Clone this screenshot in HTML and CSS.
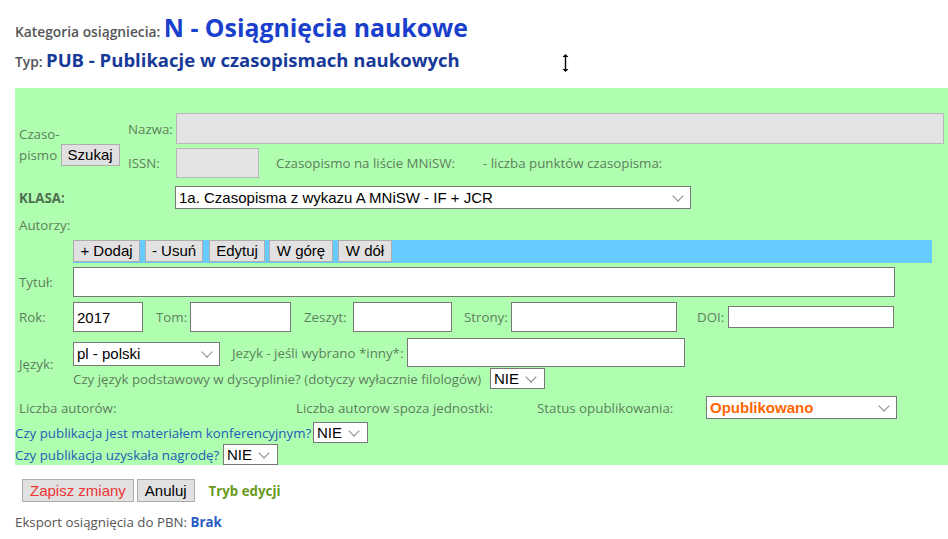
FILE: index.html
```html
<!DOCTYPE html>
<html lang="pl">
<head>
  <meta charset="UTF-8">
  <title>Osiągnięcie - edycja</title>
  <link rel="stylesheet" href="styles.css">
</head>
<body>

  <div class="head">
    <div class="head-line"><span class="head-label">Kategoria osiągniecia:</span> <span class="kat">N - Osiągnięcia naukowe</span></div>
    <div class="head-line line-typ"><span class="head-label">Typ:</span> <span class="typ">PUB - Publikacje w czasopismach naukowych</span></div>
    <svg class="cursor" width="11" height="22" viewBox="0 0 11 22">
      <path d="M5.5 0.5 L10 5.5 L7 5.5 L7 16.5 L10 16.5 L5.5 21.5 L1 16.5 L4 16.5 L4 5.5 L1 5.5 Z" fill="#fff"/>
      <path d="M5.5 2 L8.5 5 L6.2 5 L6.2 17 L8.5 17 L5.5 20 L2.5 17 L4.8 17 L4.8 5 L2.5 5 Z" fill="#000"/>
    </svg>
  </div>

  <div class="panel">

    <div class="row journal">
      <div class="journal-cell">
        <div>Czaso-</div>
        <div>pismo <button class="btn">Szukaj</button></div>
      </div>
      <div class="journal-fields">
        <div class="line">
          <span class="lbl-short">Nazwa:</span>
          <input type="text" class="in-nazwa" disabled>
        </div>
        <div class="line">
          <span class="lbl-short">ISSN:</span>
          <input type="text" class="in-issn" disabled>
          <span class="txt-mnisw">Czasopismo na liście MNiSW:</span>
          <span>- liczba punktów czasopisma:</span>
        </div>
      </div>
    </div>

    <div class="row klasa">
      <span class="lbl-wide"><b>KLASA:</b></span>
      <span class="sel sel-klasa">
        <select><option>1a. Czasopisma z wykazu A MNiSW - IF + JCR</option></select>
      </span>
    </div>

    <div class="row autorzy">
      <span>Autorzy:</span>
    </div>

    <div class="toolbar">
      <button class="btn tb-dodaj">+ Dodaj</button>
      <button class="btn tb-usun">- Usuń</button>
      <button class="btn tb-edytuj">Edytuj</button>
      <button class="btn tb-gora">W górę</button>
      <button class="btn tb-dol">W dół</button>
    </div>

    <div class="row tytul">
      <span class="lbl">Tytuł:</span>
      <input type="text" class="in-tytul">
    </div>

    <div class="row rok">
      <span class="lbl">Rok:</span>
      <input type="text" class="in-rok" value="2017">
      <span class="lbl-tom">Tom:</span>
      <input type="text" class="in-tom">
      <span class="lbl-zeszyt">Zeszyt:</span>
      <input type="text" class="in-zeszyt">
      <span class="lbl-strony">Strony:</span>
      <input type="text" class="in-strony">
      <span class="lbl-doi">DOI:</span>
      <input type="text" class="in-doi">
    </div>

    <div class="row jezyk">
      <span class="lbl">Język:</span>
      <div class="jezyk-fields">
        <div class="line">
          <span class="sel sel-jezyk">
            <select><option>pl - polski</option></select>
          </span>
          <span class="lbl-inny">Jezyk - jeśli wybrano *inny*:</span>
          <input type="text" class="in-inny">
        </div>
        <div class="line line-filo">
          <span class="txt-filo">Czy język podstawowy w dyscyplinie? (dotyczy wyłacznie filologów)</span>
          <span class="sel sel-nie">
            <select><option>NIE</option></select>
          </span>
        </div>
      </div>
    </div>

    <div class="row liczba">
      <span class="lbl-autorow">Liczba autorów:</span>
      <span class="lbl-spoza">Liczba autorow spoza jednostki:</span>
      <span class="lbl-status">Status opublikowania:</span>
      <span class="sel sel-status">
        <select><option>Opublikowano</option></select>
      </span>
    </div>

    <div class="question q-konf">
      <span class="txt-konf">Czy publikacja jest materiałem konferencyjnym?</span>
      <span class="sel sel-nie">
        <select><option>NIE</option></select>
      </span>
    </div>

    <div class="question q-nagroda">
      <span class="txt-nagroda">Czy publikacja uzyskała nagrodę?</span>
      <span class="sel sel-nie">
        <select><option>NIE</option></select>
      </span>
    </div>

  </div>

  <div class="actions">
    <button class="btn btn-save">Zapisz zmiany</button>
    <button class="btn btn-cancel">Anuluj</button>
    <span class="mode">Tryb edycji</span>
  </div>

  <div class="export">Eksport osiągnięcia do PBN: <b>Brak</b></div>

</body>
</html>
```

FILE: styles.css
```css
* {
  box-sizing: border-box;
}

body {
  margin: 0;
  padding: 0 0 0 15px;
  background-color: #ffffff;
  font-family: 'Open Sans', 'Noto Sans', sans-serif;
  font-size: 13.3px;
  color: #555;
  overflow: hidden;
}

input, select, button {
  font-family: 'Liberation Sans', Arial, sans-serif;
  font-size: 15px;
  color: #000;
  margin: 0;
}

/* Header */
.head {
  position: relative;
  padding-top: 14px;
  height: 88px;
}

.head-line {
  white-space: nowrap;
  line-height: 26px;
}

.line-typ {
  margin-top: 2px;
}

.head-label {
  font-weight: 600;
  color: #555;
  font-size: 13.8px;
}

.kat {
  font-size: 24.8px;
  font-weight: bold;
  color: #1a3fcc;
}

.typ {
  font-size: 18.5px;
  font-weight: bold;
  color: #173a99;
}

.cursor {
  position: absolute;
  left: 545px;
  top: 52px;
}

/* Green form area */
.panel {
  background-color: #b0ffb0;
  color: #5c805c;
  padding-top: 25px;
  height: 377px;
}

.row {
  display: flex;
  align-items: center;
  padding-left: 4px;
  white-space: nowrap;
}

.line {
  display: flex;
  align-items: center;
}

input[type="text"] {
  border: 1px solid #777;
  background: #fff;
  padding: 0 3px;
  height: 30px;
}

input[disabled] {
  background: #e4e4e4;
  border-color: #b8b8b8;
}

.btn {
  background: #e1e1e1;
  border: 1px solid #adadad;
  height: 22px;
  padding: 0 7px;
  line-height: 20px;
}

/* Select with windows chevron */
.sel {
  position: relative;
  display: inline-block;
}

.sel select {
  -webkit-appearance: none;
  appearance: none;
  border: 1px solid #777;
  background: #fff;
  padding: 0 0 0 3px;
  width: 100%;
  height: 100%;
  border-radius: 0;
}

.sel::after {
  content: "";
  position: absolute;
  right: 9px;
  top: 50%;
  width: 7px;
  height: 7px;
  border-right: 1px solid #8a8a8a;
  border-bottom: 1px solid #8a8a8a;
  transform: translateY(-75%) rotate(45deg);
  pointer-events: none;
}

/* Czasopismo */
.journal-cell {
  width: 109px;
  line-height: 19px;
}

.journal-cell .btn {
  width: 59px;
  padding: 0;
}

.journal-fields .line + .line {
  margin-top: 4px;
}

.lbl-short {
  width: 48px;
}

.in-nazwa {
  width: 768px;
  height: 31px !important;
}

.in-issn {
  width: 83px;
}

.txt-mnisw {
  margin-left: 17px;
  margin-right: 28px;
}

/* Klasa */
.klasa {
  margin-top: 8px;
}

.lbl-wide {
  width: 156px;
  color: #4f6e4f;
}

.sel-klasa {
  width: 516px;
  height: 23px;
}

.autorzy {
  height: 31px;
}

/* Autorzy toolbar */
.toolbar {
  display: flex;
  gap: 4px;
  margin-left: 58px;
  width: 859px;
  height: 23px;
  background: #66ccff;
}

.toolbar .btn {
  height: 22px;
  padding: 0;
}

.tb-dodaj { width: 67px; }
.tb-usun { width: 58px; margin-left: 1px; }
.tb-edytuj { width: 56px; margin-left: 2px; }
.tb-gora { width: 64px; }
.tb-dol { width: 54px; margin-left: 1px; }

.lbl {
  width: 54px;
}

.tytul {
  margin-top: 4px;
}

.in-tytul {
  width: 822px;
}

/* Rok / Tom / ... */
.rok {
  margin-top: 5px;
}

.in-rok { width: 70px; }
.lbl-tom { margin-left: 13px; width: 34px; }
.in-tom { width: 101px; }
.lbl-zeszyt { margin-left: 13px; width: 49px; }
.in-zeszyt { width: 99px; }
.lbl-strony { margin-left: 12px; width: 47px; }
.in-strony { width: 166px; }
.lbl-doi { margin-left: 20px; width: 31px; }
.in-doi { width: 166px; height: 22px !important; }

/* Jezyk */
.jezyk {
  margin-top: 6px;
}

.sel-jezyk {
  width: 147px;
  height: 24px;
  margin-top: 2px;
}

.lbl-inny {
  width: 187px;
  padding-left: 12px;
}

.in-inny {
  width: 278px;
  height: 29px !important;
}

.line-filo {
  margin-top: 1px;
}

.txt-filo {
  width: 414px;
}

.sel-nie {
  width: 55px;
  height: 21px;
  margin-left: 3px;
}

.sel-nie::after {
  right: 10px;
}

/* Liczba autorow */
.liczba {
  margin-top: 7px;
}

.lbl-autorow { width: 277px; }
.lbl-spoza { width: 241px; }
.lbl-status { width: 169px; }

.sel-status {
  width: 191px;
  height: 23px;
}

.sel-status select {
  color: #ff6600;
  font-weight: bold;
}

/* Pytania */
.question {
  display: flex;
  align-items: center;
  color: #1f5cb8;
  white-space: nowrap;
}

.txt-konf {
  width: 295px;
}

.txt-nagroda {
  width: 205px;
}

.q-konf {
  margin-top: 3px;
}

.q-nagroda {
  margin-top: 1px;
}

/* Dolne przyciski */
.actions {
  display: flex;
  align-items: center;
  margin-top: 14px;
  padding-left: 7px;
}

.actions .btn {
  height: 23px;
  padding: 0 7px;
}

.btn-save {
  color: #ee3333;
  margin-right: 3px;
}

.mode {
  margin-left: 14px;
  font-weight: bold;
  color: #6a9a1e;
}

.export {
  margin-top: 11px;
}

.export b {
  color: #2a5cc4;
}
```
